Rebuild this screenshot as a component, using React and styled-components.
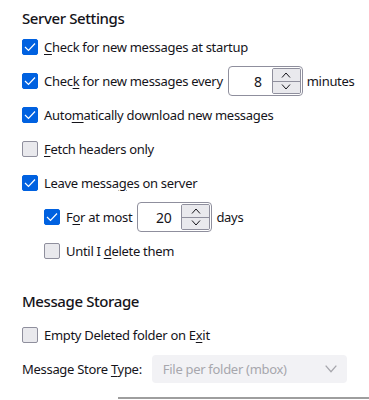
import React from "react";
import styled, { createGlobalStyle } from "styled-components";

const Global = createGlobalStyle`
  body {
    margin: 0;
    background: #fff;
    font-family: "Noto Sans", sans-serif;
    color: #15141a;
  }
`;

const Page = styled.div`
  width: 369px;
  height: 400px;
  overflow: hidden;
  padding: 7px 0 0 22px;
  box-sizing: border-box;
`;

const Heading = styled.h2`
  margin: 0 0 ${(p) => p.$gap || 0}px;
  font-size: 15px;
  font-weight: 500;
  letter-spacing: -0.4px;
  line-height: 23px;
`;

const Section = styled.section`
  display: flex;
  flex-direction: column;
  margin-bottom: ${(p) => p.$after || 0}px;
`;

const Row = styled.div`
  display: flex;
  align-items: center;
  height: 34px;
  padding-left: ${(p) => (p.$indent ? 22 : 0)}px;
  font-size: 13px;
  letter-spacing: -0.3px;
  white-space: nowrap;
  gap: 6px;
`;

const Box = styled.span`
  width: 16px;
  height: 16px;
  box-sizing: border-box;
  border-radius: 2px;
  flex-shrink: 0;
  display: flex;
  align-items: center;
  justify-content: center;
  background: ${(p) => (p.$on ? "#0061e0" : "#e9e9ed")};
  border: 1px solid ${(p) => (p.$on ? "#0061e0" : "#8f8f9d")};
`;

const Key = styled.u`
  text-underline-offset: 2px;
`;

const Spin = styled.div`
  display: flex;
  width: 75px;
  height: 30px;
  box-sizing: border-box;
  border: 1px solid #8f8f9d;
  border-radius: 4px;
  margin: 0 -2px 0 -1px;
  padding: 1px;
  flex-shrink: 0;
`;

const SpinValue = styled.span`
  flex: 1;
  display: flex;
  align-items: center;
  justify-content: flex-end;
  padding-right: 10px;
  font-size: 14px;
`;

const SpinButtons = styled.div`
  width: 27px;
  display: flex;
  flex-direction: column;
  border: 1px solid #8f8f9d;
  border-radius: 2px;
  overflow: hidden;
`;

const SpinBtn = styled.span`
  flex: 1;
  background: #e9e9ed;
  display: flex;
  align-items: center;
  justify-content: center;
  & + & {
    border-top: 1px solid #8f8f9d;
  }
`;

const Select = styled.div`
  width: 195px;
  height: 28px;
  box-sizing: border-box;
  border-radius: 4px;
  background: #f2f2f5;
  color: #a7a7ad;
  display: flex;
  align-items: center;
  justify-content: space-between;
  padding: 0 9px 0 11px;
  margin-left: 4px;
  flex-shrink: 0;
`;

const Rule = styled.div`
  margin: 11px 0 0 96px;
  height: 2px;
  background: #9e9e9e;
`;

const Check = () => (
  <svg width="12" height="10" viewBox="0 0 12 10">
    <path d="M1 5 L4.5 8.5 L11 1.5" fill="none" stroke="#fff" strokeWidth="1.2" />
  </svg>
);

const Chevron = ({ up, size = 10, color = "#15141a" }) => (
  <svg width={size} height={size / 2 + 1} viewBox="0 0 10 6">
    <path
      d={up ? "M1 5.5 L5 1 L9 5.5" : "M1 0.5 L5 5 L9 0.5"}
      fill="none"
      stroke={color}
      strokeWidth="1"
    />
  </svg>
);

const Checkbox = ({ on }) => <Box $on={on}>{on && <Check />}</Box>;

const Spinner = ({ value }) => (
  <Spin>
    <SpinValue>{value}</SpinValue>
    <SpinButtons>
      <SpinBtn>
        <Chevron up />
      </SpinBtn>
      <SpinBtn>
        <Chevron />
      </SpinBtn>
    </SpinButtons>
  </Spin>
);

export default function App() {
  return (
    <>
      <Global />
      <Page>
        <Section $after={22}>
          <Heading>Server Settings</Heading>
          <Row>
            <Checkbox on />
            <span>
              <Key>C</Key>heck for new messages at startup
            </span>
          </Row>
          <Row>
            <Checkbox on />
            <span>
              Chec<Key>k</Key> for new messages every
            </span>
            <Spinner value="8" />
            <span>minutes</span>
          </Row>
          <Row>
            <Checkbox on />
            <span>
              Auto<Key>m</Key>atically download new messages
            </span>
          </Row>
          <Row>
            <Checkbox />
            <span>
              <Key>F</Key>etch headers only
            </span>
          </Row>
          <Row>
            <Checkbox on />
            <span>
              Leave messa<Key>g</Key>es on server
            </span>
          </Row>
          <Row $indent>
            <Checkbox on />
            <span>
              F<Key>o</Key>r at most
            </span>
            <Spinner value="20" />
            <span>days</span>
          </Row>
          <Row $indent>
            <Checkbox />
            <span>
              Until I <Key>d</Key>elete them
            </span>
          </Row>
        </Section>
        <Section>
          <Heading $gap={5}>Message Storage</Heading>
          <Row>
            <Checkbox />
            <span>
              Empty Deleted folder on E<Key>x</Key>it
            </span>
          </Row>
          <Row>
            <span>
              Message Store <Key>T</Key>ype:
            </span>
            <Select>
              <span>File per folder (mbox)</span>
              <Chevron size={14} color="#a7a7ad" />
            </Select>
          </Row>
        </Section>
        <Rule />
      </Page>
    </>
  );
}
